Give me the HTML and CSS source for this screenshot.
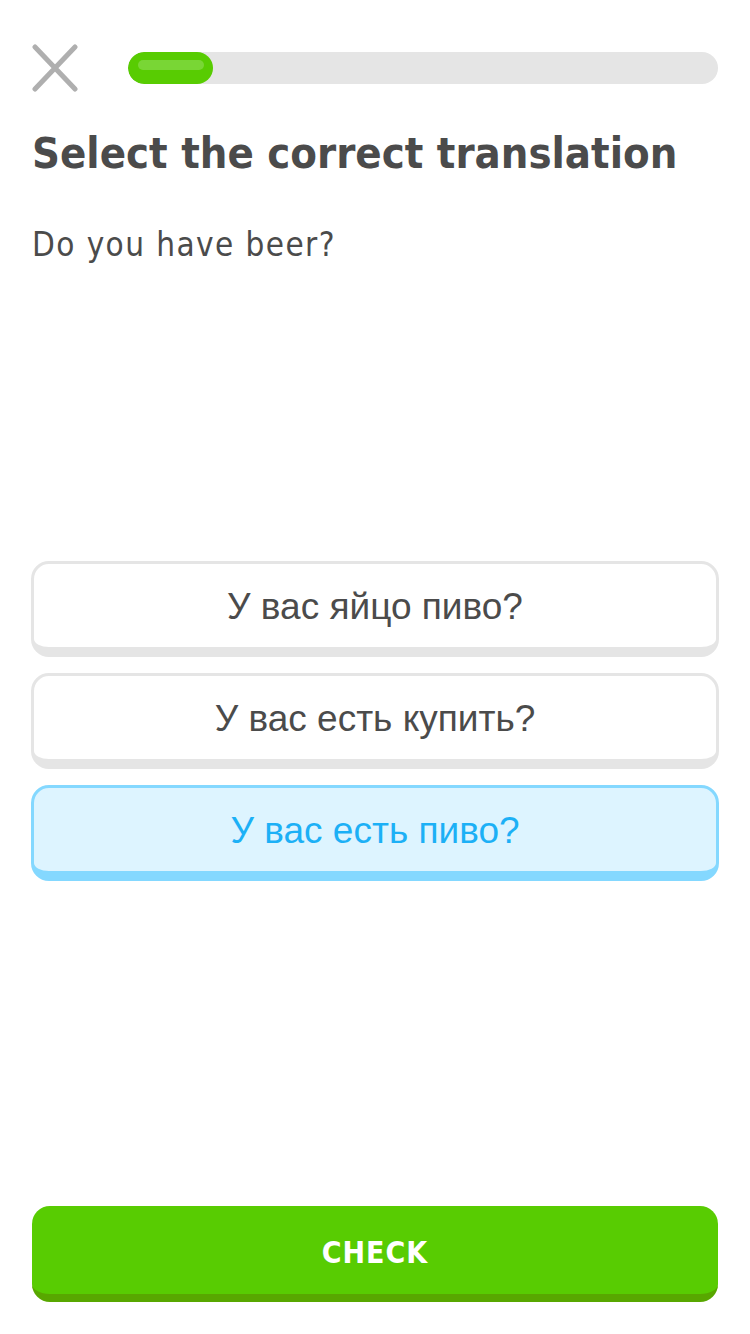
FILE: index.html
```html
<!DOCTYPE html>
<html>
<head>
<meta charset="utf-8">
<link rel="stylesheet" href="styles.css">
</head>
<body>
<div class="page">
  <div class="top">
    <svg class="close" width="48" height="48" viewBox="0 0 48 48">
      <path d="M4 3 L44 45 M44 3 L4 45" stroke="#afafaf" stroke-width="5" stroke-linecap="round" fill="none"/>
    </svg>
    <div class="bar">
      <div class="fill" style="width:85px"><div class="shine"></div></div>
    </div>
  </div>
  <h1 class="title">Select the correct translation</h1>
  <p class="prompt">Do you have beer?</p>
  <div class="options">
    <div class="option">У вас яйцо пиво?</div>
    <div class="option">У вас есть купить?</div>
    <div class="option selected">У вас есть пиво?</div>
  </div>
  <div class="footer">
    <div class="check">CHECK</div>
  </div>
</div>
</body>
</html>
```
FILE: styles.css
```css
html, body {
  margin: 0;
  padding: 0;
  background: #ffffff;
}
.page {
  height: 1334px;
  box-sizing: border-box;
  padding: 45px 32px 32px 32px;
  display: flex;
  flex-direction: column;
  font-family: "DejaVu Sans Condensed", "DejaVu Sans", sans-serif;
  color: #4b4b4b;
}
.top {
  display: flex;
  align-items: center;
  height: 46px;
}
.close {
  width: 48px;
  height: 48px;
  margin-left: -1px;
  flex: none;
}
.bar {
  flex: 1;
  height: 32px;
  margin-left: 49px;
  border-radius: 16px;
  background: #e5e5e5;
  overflow: hidden;
  display: flex;
}
.fill {
  height: 32px;
  border-radius: 16px;
  background: #58cc02;
  box-sizing: border-box;
  padding: 8px 9px 0 10px;
}
.shine {
  height: 10px;
  border-radius: 5px;
  background: #79d635;
}
.title {
  margin: 34px 0 0 0;
  font-size: 43.2px;
  font-weight: 700;
  line-height: 56px;
  color: #4b4b4b;
}
.prompt {
  margin: 44px 0 0 0;
  font-size: 33px;
  line-height: 40px;
  font-weight: 400;
  letter-spacing: 1.4px;
}
.options {
  margin-top: 296px;
  display: flex;
  flex-direction: column;
  gap: 16px;
  margin-left: -1px;
  margin-right: -1px;
}
.option {
  height: 96px;
  box-sizing: border-box;
  border: 3px solid #e5e5e5;
  border-bottom-width: 10px;
  border-radius: 18px;
  background: #ffffff;
  display: flex;
  align-items: center;
  justify-content: center;
  font-family: "Liberation Sans", Arial, sans-serif;
  font-size: 37px;
  color: #4b4b4b;
  padding-top: 2px;
}
.option.selected {
  border-color: #84d8ff;
  background: #ddf4ff;
  color: #1cb0f6;
}
.footer {
  margin-top: auto;
}
.check {
  height: 96px;
  box-sizing: border-box;
  border-radius: 18px;
  background: #58cc02;
  border-bottom: 8px solid #58a700;
  display: flex;
  align-items: center;
  justify-content: center;
  color: #ffffff;
  font-size: 30px;
  font-weight: 700;
  letter-spacing: 1px;
  padding-top: 4px;
}
```
